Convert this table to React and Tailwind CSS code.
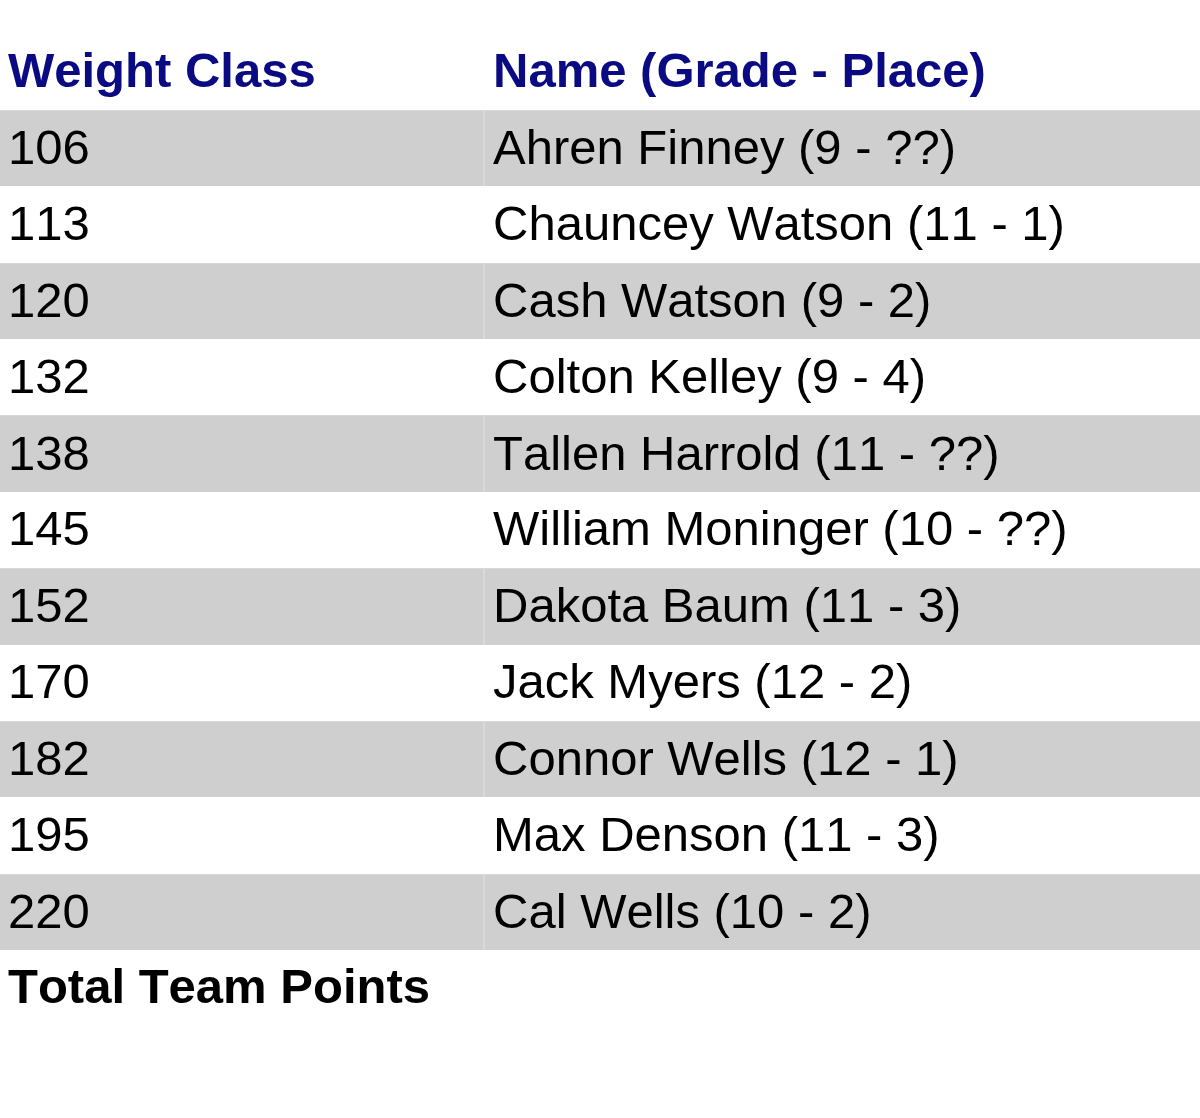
const rows = [
  ["106", "Ahren Finney (9 - ??)"],
  ["113", "Chauncey Watson (11 - 1)"],
  ["120", "Cash Watson (9 - 2)"],
  ["132", "Colton Kelley (9 - 4)"],
  ["138", "Tallen Harrold (11 - ??)"],
  ["145", "William Moninger (10 - ??)"],
  ["152", "Dakota Baum (11 - 3)"],
  ["170", "Jack Myers (12 - 2)"],
  ["182", "Connor Wells (12 - 1)"],
  ["195", "Max Denson (11 - 3)"],
  ["220", "Cal Wells (10 - 2)"],
];

export default function App() {
  return (
    <div
      className="w-[1200px] h-[1118px] bg-white text-black overflow-hidden [font-kerning:none]"
      style={{ fontFamily: '"Liberation Sans", Arial, sans-serif' }}
    >
      <div className="grid grid-cols-[483px_1fr] h-[110px] text-[49px] font-bold text-[#0a0a82] leading-[56px]">
        <div className="pl-2 pt-[42px]">Weight Class</div>
        <div className="pl-[10px] pt-[42px]">Name (Grade - Place)</div>
      </div>
      {rows.map(([w, n], i) => {
        const gray = i % 2 === 0;
        return (
          <div
            key={w}
            className={
              gray
                ? "grid grid-cols-[483px_1fr] h-[76.36px] bg-[#cfcfcf] border-t border-[#d8d8d8] text-[49px] leading-[56px]"
                : "grid grid-cols-[483px_1fr] h-[76.36px] bg-white text-[49px] leading-[56px]"
            }
          >
            <div className="pl-2 flex items-center pb-[3px]">{w}</div>
            <div
              className={
                gray
                  ? "pl-2 flex items-center pb-[3px] border-l-2 border-[#d9d9d9]"
                  : "pl-2 flex items-center pb-[3px] border-l-2 border-white"
              }
            >
              {n}
            </div>
          </div>
        );
      })}
      <div className="h-[76px] flex items-center pl-2 pb-[3px] text-[49px] leading-[56px] font-bold">
        Total Team Points
      </div>
    </div>
  );
}
